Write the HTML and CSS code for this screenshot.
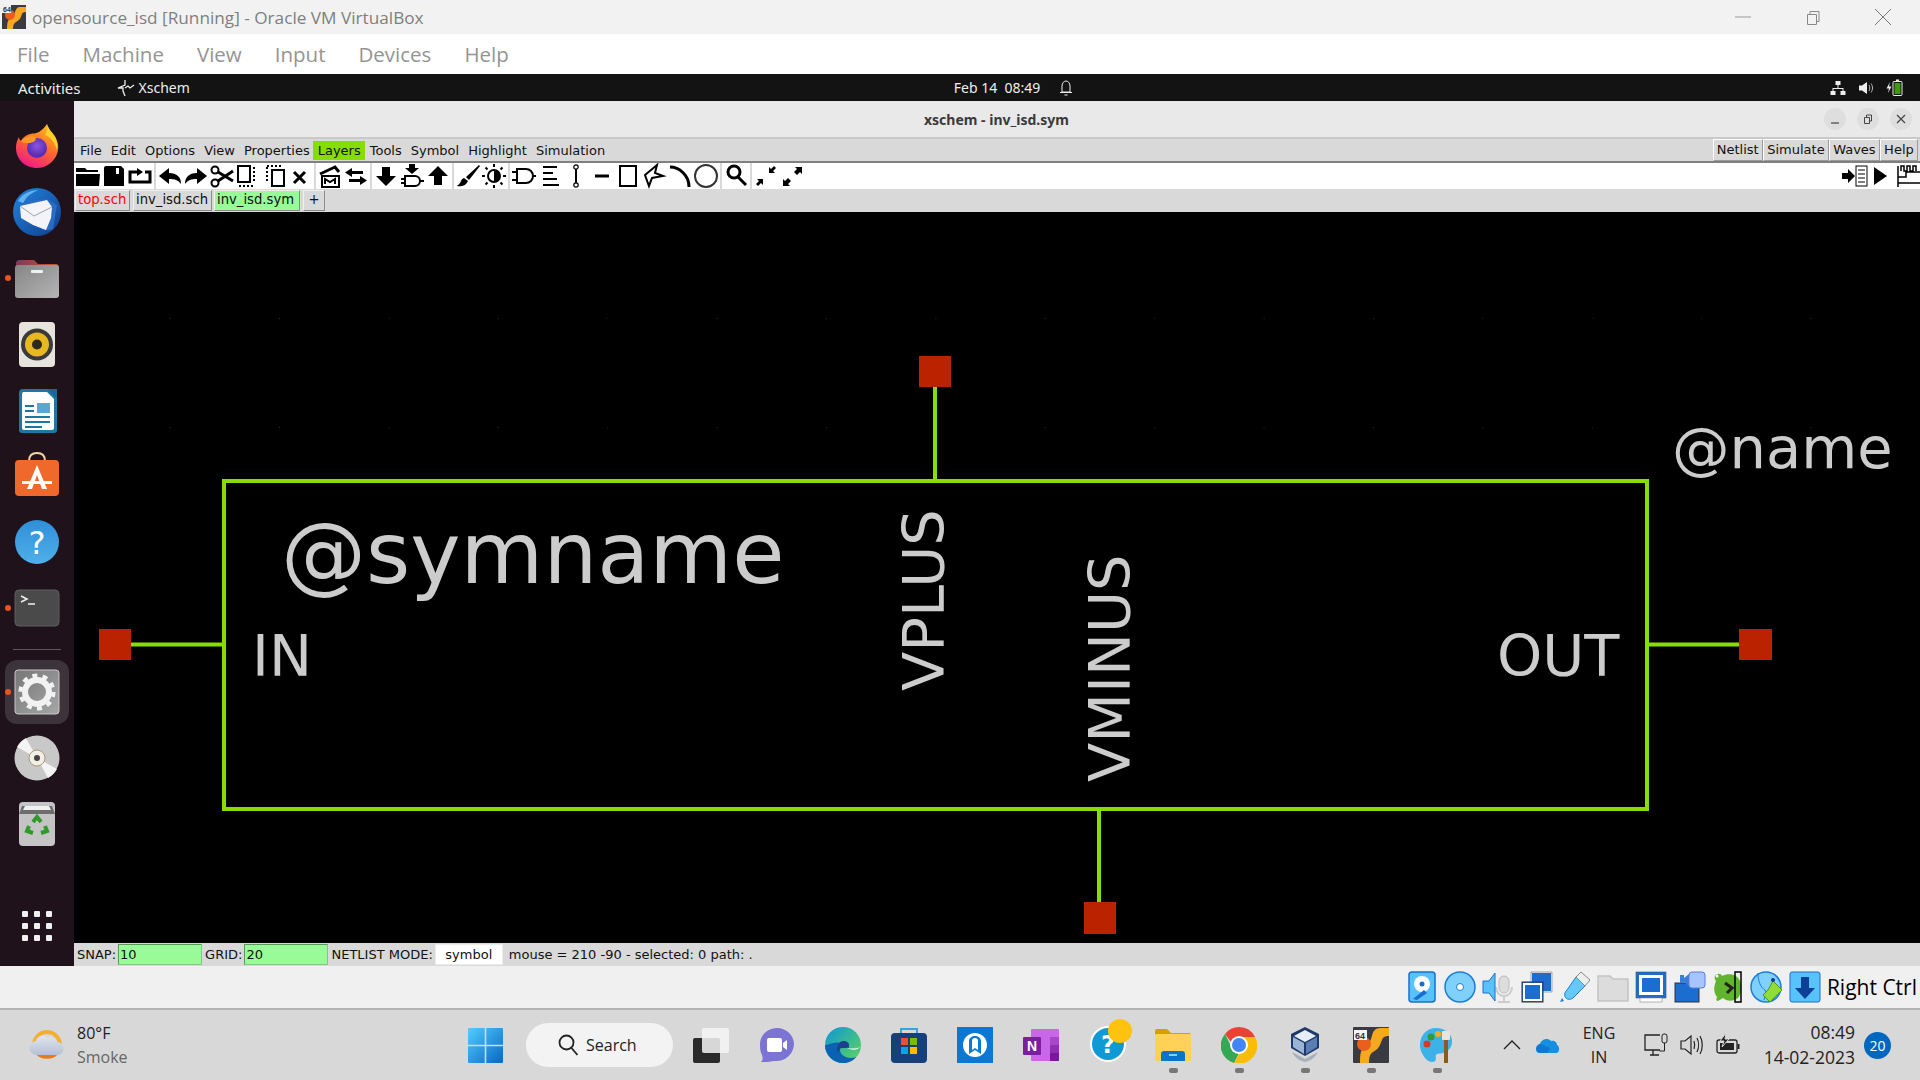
FILE: index.html
```html
<!DOCTYPE html>
<html lang="en">
<head>
<meta charset="UTF-8">
<title>opensource_isd [Running] - Oracle VM VirtualBox</title>
<link rel="stylesheet" href="styles.css">
</head>
<body>

<!-- VirtualBox host window -->
<div class="vm-title">
    <svg class="vm-logo" width="24" height="24" viewBox="0 0 24 24">
        <rect width="24" height="24" fill="#3a3a42"/>
        <path d="M24 2h-6c-3 0-4 2-5 5-1 4-2 6-5 7-2 1-3 3-3 10h6c0-4 1-6 3-7 4-2 5-5 6-8 0-1 1-2 4-2z" fill="#f6a821"/>
        <circle cx="8" cy="10" r="5" fill="#e8601c"/>
        <rect x="0" y="0" width="9" height="8" fill="#eee"/>
        <text x="1" y="7" class="vm-logo-text">64</text>
    </svg>
    <span class="vm-title-text">opensource_isd [Running] - Oracle VM VirtualBox</span>
    <div class="win-controls">
        <svg width="16" height="16" viewBox="0 0 16 16"><path d="M0 8h16" stroke="#999" fill="none"/></svg>
        <svg width="16" height="16" viewBox="0 0 16 16"><path d="M2.500 5.500h9v10h-9zM5 5.500v-3h9v10h-2.500" stroke="#888" fill="none"/></svg>
        <svg width="16" height="16" viewBox="0 0 16 16"><path d="M0 0l16 16M16 0L0 16" stroke="#777" fill="none"/></svg>
    </div>
</div>
<div class="vm-menu">
    <span>File</span><span>Machine</span><span>View</span><span>Input</span><span>Devices</span><span>Help</span>
</div>

<!-- guest desktop -->
<div class="gnome-bar">
    <span class="activities">Activities</span>
    <span class="app-name">
        <svg width="20" height="18" viewBox="0 0 20 18"><path d="M9 1v5l-7 3h5v3l2 5M9 9l3-2 2 2 4-3" stroke="#eee" stroke-width="1.300" fill="none"/></svg>
        Xschem
    </span>
    <span class="clock">Feb 14&nbsp; 08:49</span>
    <svg class="bell" width="14" height="16" viewBox="0 0 14 16"><path d="M3 12V6c0-3 2-5 4-5s4 2 4 5v6zM1 12.500h12M5.500 15h3" stroke="#eee" fill="none"/></svg>
    <div class="gnome-tray">
        <svg width="16" height="16" viewBox="0 0 16 16" fill="#eee"><rect x="5.500" y="1" width="5" height="4"/><rect x="0.500" y="11" width="5" height="4"/><rect x="10.500" y="11" width="5" height="4"/><path d="M7.500 5h1v3h5v3h-1V9h-9v2h-1V8h5z"/></svg>
        <svg width="16" height="16" viewBox="0 0 16 16"><path d="M1 5.500h3L9 2v12L4 10.500H1z" fill="#eee"/><path d="M11 5c1 2 1 4 0 6M13 3.500c2 3 2 6 0 9" stroke="#bbb" fill="none"/></svg>
        <svg width="17" height="18" viewBox="0 0 17 18"><path d="M4 3L0.500 9.500H3L2 14l3.500-6.500H3z" fill="#eee"/><rect x="7" y="2.500" width="9" height="14" rx="1" fill="#111" stroke="#eee"/><rect x="10" y="0.500" width="3" height="2" fill="#eee"/><rect x="8.500" y="4" width="6" height="11" fill="#3f9a0a"/></svg>
    </div>
</div>

<div class="desktop">
    <nav class="dock">
        <div class="dock-item">
            <svg width="48" height="48" viewBox="0 0 48 48">
                <defs>
                    <linearGradient id="ffBody" x1="0.800" y1="0" x2="0.300" y2="1"><stop offset="0" stop-color="#ffc21c"/><stop offset="0.500" stop-color="#ff6a2b"/><stop offset="1" stop-color="#f0178b"/></linearGradient>
                    <radialGradient id="ffCore" cx="0.500" cy="0.400"><stop offset="0" stop-color="#8b55e0"/><stop offset="1" stop-color="#5a2db0"/></radialGradient>
                </defs>
                <path d="M34 2c1 5 4 7 7 11 5 7 5 14 3 19-3 8-11 14-20 14C12 46 3 37 3 26c0-6 2-9 3-11 0 2 1 3 2 4 2-4 5-6 9-7 4-1 5 0 9-2 3-2 6-5 8-8z" fill="url(#ffBody)"/>
                <path d="M34 2c2 6 5 8 8 13 2 4 3 9 2 13-2-7-6-13-12-15 2-3 3-7 2-11z" fill="#ffd42a"/>
                <circle cx="24" cy="26" r="10" fill="url(#ffCore)"/>
                <path d="M8 19c3-3 9-6 13-4 3 1 2 4-1 5l-3 1c-4 0-7 0-9-2z" fill="#ff9a26"/>
            </svg>
        </div>
        <div class="dock-item">
            <svg width="48" height="48" viewBox="0 0 48 48">
                <defs><linearGradient id="tbBlue" x1="0" y1="0" x2="1" y2="1"><stop offset="0" stop-color="#1f86de"/><stop offset="1" stop-color="#123c8c"/></linearGradient></defs>
                <circle cx="24" cy="24" r="24" fill="url(#tbBlue)"/>
                <path d="M8 14l26-3 10 6-4 24c-8 3-12 0-16-3C18 34 12 30 6 26z" fill="#2a6cc4"/>
                <path d="M7 18l27-6 5 7-1 11-5 12-13-5-12-7z" fill="#f4f4f8"/>
                <path d="M7 18l14 10 18-9" stroke="#9aa4b8" fill="none"/>
                <path d="M5 13c4-7 12-11 21-11-6 2-12 6-14 10l-2 3z" fill="#62b4f0"/>
            </svg>
        </div>
        <div class="dock-item running">
            <svg width="48" height="48" viewBox="0 0 48 48">
                <defs>
                    <linearGradient id="fileTab" x1="0" y1="0" x2="1" y2="0"><stop offset="0" stop-color="#7c3a5e"/><stop offset="1" stop-color="#c8582a"/></linearGradient>
                    <linearGradient id="fileBody" x1="0" y1="0" x2="1" y2="1"><stop offset="0" stop-color="#868686"/><stop offset="1" stop-color="#b4b4b4"/></linearGradient>
                </defs>
                <path d="M3 10c0-3 1-4 4-4h14l4 4h17c3 0 4 1 4 4v8H3z" fill="url(#fileTab)"/>
                <rect x="2" y="11" width="44" height="33" rx="3" fill="url(#fileBody)"/>
                <rect x="18" y="16" width="12" height="3" rx="1" fill="#f0f0f0"/>
            </svg>
        </div>
        <div class="dock-item">
            <svg width="48" height="48" viewBox="0 0 48 48">
                <rect x="6" y="2" width="36" height="45" rx="4" fill="#e6e3dc"/>
                <circle cx="24" cy="24.500" r="16" fill="#3a3a3a"/>
                <circle cx="24" cy="24.500" r="12" fill="#e8b820"/>
                <circle cx="24" cy="24.500" r="5" fill="#2e2a20"/>
            </svg>
        </div>
        <div class="dock-item">
            <svg width="48" height="48" viewBox="0 0 48 48">
                <path d="M10 3h26l8 8v33a3 3 0 0 1-3 3H9a3 3 0 0 1-3-3V7a4 4 0 0 1 4-4z" fill="#1d77a5"/>
                <path d="M10 6h24l7 7v29a2 2 0 0 1-2 2H11a2 2 0 0 1-2-2V8z" fill="#fff"/>
                <path d="M34 3l10 10V3z" fill="#186a94"/>
                <rect x="24" y="17" width="13" height="10" fill="#5aa7d4"/>
                <rect x="12" y="19" width="9" height="2" fill="#1d77a5"/>
                <rect x="12" y="24" width="9" height="2" fill="#1d77a5"/>
                <rect x="12" y="30" width="25" height="2" fill="#1d77a5"/>
                <rect x="12" y="35" width="25" height="2" fill="#1d77a5"/>
                <rect x="12" y="40" width="17" height="2" fill="#1d77a5"/>
            </svg>
        </div>
        <div class="dock-item">
            <svg width="48" height="48" viewBox="0 0 48 48">
                <path d="M16 9c0-6 4-8 8-8s8 2 8 8" stroke="#f3d3a8" stroke-width="2" fill="none"/>
                <rect x="2" y="8" width="44" height="36" rx="4" fill="#f0692c"/>
                <path d="M24 13L14 37h5l5-14 5 14h5z" fill="#fff"/>
                <rect x="9" y="29" width="30" height="3" fill="#fff"/>
            </svg>
        </div>
        <div class="dock-item">
            <svg width="48" height="48" viewBox="0 0 48 48">
                <defs><linearGradient id="helpBlue" x1="0" y1="0" x2="0" y2="1"><stop offset="0" stop-color="#2f8ed8"/><stop offset="1" stop-color="#4fb0ea"/></linearGradient></defs>
                <circle cx="24" cy="24" r="22" fill="url(#helpBlue)"/>
                <text x="24" y="36" class="help-mark">?</text>
            </svg>
        </div>
        <div class="dock-item running">
            <svg width="48" height="48" viewBox="0 0 48 48">
                <rect x="2" y="6" width="44" height="36" rx="4" fill="#4a4a4a" stroke="#5e5e5e"/>
                <path d="M8 12l6 3-6 3" stroke="#f0f0f0" stroke-width="1.500" fill="none"/>
                <path d="M15 20h7" stroke="#f0f0f0" stroke-width="1.500"/>
            </svg>
        </div>
        <div class="dock-sep"></div>
        <div class="dock-item running active">
            <svg width="48" height="48" viewBox="0 0 48 48">
                <defs><linearGradient id="setBg" x1="0" y1="0" x2="1" y2="1"><stop offset="0" stop-color="#777"/><stop offset="1" stop-color="#a6a6a6"/></linearGradient></defs>
                <rect x="2" y="2" width="44" height="44" rx="3" fill="url(#setBg)" stroke="#c8c8c8"/>
                <circle cx="24" cy="24" r="12" fill="none" stroke="#f2f2f2" stroke-width="6"/>
                <circle cx="24" cy="24" r="16.500" fill="none" stroke="#f2f2f2" stroke-width="4" stroke-dasharray="5 5.370"/>
            </svg>
        </div>
        <div class="dock-item">
            <svg width="48" height="48" viewBox="0 0 48 48">
                <circle cx="24" cy="24" r="22.500" fill="#c8c8c8"/>
                <path d="M24 24L4 13A22.500 22.500 0 0 1 13 4zM24 24L44 35A22.500 22.500 0 0 1 35 44z" fill="#f4f4f4"/>
                <circle cx="24" cy="24" r="8" fill="#f2efe6" stroke="#a89878"/>
                <circle cx="24" cy="24" r="3" fill="#444"/>
            </svg>
        </div>
        <div class="dock-item">
            <svg width="48" height="48" viewBox="0 0 48 48">
                <rect x="6" y="2" width="36" height="44" rx="4" fill="#c4c4c4"/>
                <path d="M9 6h30l3 8H6z" fill="#6e6e6e"/>
                <path d="M12 6h24l2 4H10z" fill="#f0f0f0"/>
                <g fill="none" stroke="#2f9a2a" stroke-width="4">
                    <path d="M20 22l4-5 4 5"/><path d="M32 26l2 5-6 2"/><path d="M16 26l-2 5 6 2"/>
                </g>
            </svg>
        </div>
        <div class="dock-apps">
            <i></i><i></i><i></i><i></i><i></i><i></i><i></i><i></i><i></i>
        </div>
    </nav>

    <main class="xschem">
        <div class="xs-title">
            <span class="xs-title-text">xschem - inv_isd.sym</span>
            <div class="xs-controls">
                <span><svg width="10" height="10" viewBox="0 0 10 10"><path d="M1 9h8" stroke="#444" stroke-width="1.200"/></svg></span>
                <span><svg width="10" height="10" viewBox="0 0 10 10"><path d="M1.500 3.500h5v6h-5zM3.500 3V1h5v6H7" stroke="#444" fill="none"/></svg></span>
                <span><svg width="10" height="10" viewBox="0 0 10 10"><path d="M1 1l8 8M9 1L1 9" stroke="#444" stroke-width="1.200"/></svg></span>
            </div>
        </div>

        <div class="xs-menu">
            <span>File</span><span>Edit</span><span>Options</span><span>View</span><span>Properties</span>
            <span class="layers">Layers</span>
            <span>Tools</span><span>Symbol</span><span>Highlight</span><span>Simulation</span>
            <div class="xs-menu-right">
                <span>Netlist</span><span>Simulate</span><span>Waves</span><span>Help</span>
            </div>
        </div>

        <div class="toolbar">
            <svg viewBox="0 0 26 26"><path d="M1 9V5h9l2 2h11v2zM1 11h24l-1 12H1z"/></svg>
            <svg viewBox="0 0 26 26"><path d="M5 3h15l3 3v17H3V5a2 2 0 0 1 2-2z"/><rect x="15" y="5" width="3" height="6" fill="#fff"/></svg>
            <svg viewBox="0 0 26 26"><path d="M10 9H3v10h20V9h-5" class="ln3"/><path d="M10 5l6 4-6 4z"/></svg>
            <i class="tb-sep"></i>
            <svg viewBox="0 0 26 26"><path d="M12 5L2 13l10 8v-5c6 0 9 1 12 5 0-7-4-11-12-11z"/></svg>
            <svg viewBox="0 0 26 26"><path d="M14 5l10 8-10 8v-5c-6 0-9 1-12 5 0-7 4-11 12-11z"/></svg>
            <svg viewBox="0 0 26 26"><circle cx="6" cy="7" r="3.500" class="ln2"/><circle cx="6" cy="20" r="3.500" class="ln2"/><path d="M9 9l15 9M9 18L24 8" class="ln3"/></svg>
            <svg viewBox="0 0 26 26"><rect x="3" y="3" width="12" height="16" class="ln2"/><path d="M19 4v16M4 23h16" class="ln3 dots"/></svg>
            <svg viewBox="0 0 26 26"><rect x="11" y="7" width="12" height="16" class="ln2"/><path d="M6 4v16M6 3h16" class="ln3 dots"/></svg>
            <svg viewBox="0 0 26 26"><path d="M7 9l11 11M18 9L7 20" class="ln3"/></svg>
            <i class="tb-sep"></i>
            <svg viewBox="0 0 26 26"><path d="M5 13h17v11H5z" class="ln2"/><path d="M3 11L18 4l4 5" class="ln3"/><path d="M8 21v-5l5 3 5-3v5" class="ln2"/></svg>
            <svg viewBox="0 0 26 26"><path d="M9 5L2 9.500 9 14v-3h11V8H9zM17 13l7 4.500-7 4.500v-3H6v-3h11z"/></svg>
            <i class="tb-sep"></i>
            <svg viewBox="0 0 26 26"><path d="M9 4h8v9h6L13 23 3 13h6z"/></svg>
            <svg viewBox="0 0 26 26"><path d="M10 1h6v4h4l-7 6-7-6h4z"/><path d="M6 13h10a5 5 0 0 1 0 10H6zM2 16h4M2 20h4M21 18h4" class="ln2"/></svg>
            <svg viewBox="0 0 26 26"><path d="M13 3l10 10h-6v9H9v-9H3z"/></svg>
            <i class="tb-sep"></i>
            <svg viewBox="0 0 26 26"><path d="M24 2L11 14l3 3L25 3zM9 15c-3 1-3 4-4 5-1 2-3 2-3 3 3 1 9 0 11-5z"/></svg>
            <svg viewBox="0 0 26 26"><circle cx="13" cy="13" r="6" class="ln2"/><path d="M13 7a6 6 0 0 1 0 12z"/><path d="M13 1v3M13 22v3M1 13h3M22 13h3M4.500 4.500l2 2M19.500 19.500l2 2M21.500 4.500l-2 2M6.500 19.500l-2 2" class="ln2"/></svg>
            <i class="tb-sep"></i>
            <svg viewBox="0 0 26 26"><path d="M6 6h9a7 7 0 0 1 0 14H6zM1 9h5M1 17h5M22 13h3" class="ln2"/></svg>
            <svg viewBox="0 0 26 26"><path d="M6 4h14M6 10h10M6 16h14M6 22h16" class="ln2"/></svg>
            <svg viewBox="0 0 26 26"><path d="M13 6v14" class="ln2"/><circle cx="13" cy="4" r="2.200" class="ln1"/><circle cx="13" cy="22" r="2.200" class="ln1"/></svg>
            <svg viewBox="0 0 26 26"><path d="M6 13h14" class="ln3"/></svg>
            <svg viewBox="0 0 26 26"><rect x="5" y="3" width="16" height="20" class="ln2"/></svg>
            <svg viewBox="0 0 26 26"><path d="M16 2L4 12l4 11 3-8 11-2-8-3z" class="ln2"/></svg>
            <svg viewBox="0 0 26 26"><path d="M3 4c9 0 19 8 19 20" class="ln3"/></svg>
            <svg viewBox="0 0 26 26"><circle cx="13" cy="13" r="11" fill="none" stroke="#333" stroke-width="2"/></svg>
            <i class="tb-sep"></i>
            <svg viewBox="0 0 26 26"><circle cx="11" cy="9" r="6" class="ln3"/><path d="M15 14l8 8" class="ln3"/></svg>
            <i class="tb-sep"></i>
            <svg viewBox="0 0 26 26"><path d="M16 10V4l2 2 3-3 2 2-3 3 2 2zM10 16v6l-2-2-3 3-2-2 3-3-2-2z"/></svg>
            <svg viewBox="0 0 26 26"><path d="M23 4v7l-2-2-3 3-3-3 3-3-2-2zM4 23v-7l2 2 3-3 3 3-3 3 2 2z"/></svg>
            <div class="toolbar-right">
                <svg viewBox="0 0 30 26"><path d="M1 10h6V6l7 7-7 7v-4H1z"/><rect x="15" y="3" width="11" height="20" fill="none" stroke="#000"/><path d="M17 7h7M17 11h7M17 15h7M17 19h7" stroke="#000"/></svg>
                <svg viewBox="0 0 18 26"><path d="M3 4l13 9-13 9z"/></svg>
                <svg viewBox="0 0 24 26"><path d="M2 3v21M2 20h22M2 14h8v-5h14M5 8V3h3v5h3V3h3v5h3V3h3v5" fill="none" stroke="#000" stroke-width="1.500"/></svg>
            </div>
        </div>

        <div class="tabs">
            <span class="tab tab-red">top.sch</span>
            <span class="tab tab-sch">inv_isd.sch</span>
            <span class="tab tab-green">inv_isd.sym</span>
            <span class="tab tab-add">+</span>
        </div>

        <!-- symbol drawing, place on the canvas is the content -->
        <svg class="canvas" viewBox="74 212 1846 731" width="1846" height="731">
            <defs>
                <pattern id="grid" x="279" y="427" width="109.400" height="109" patternUnits="userSpaceOnUse">
                    <rect width="1" height="1" fill="#2c2c2c"/>
                </pattern>
            </defs>
            <rect x="74" y="212" width="1846" height="731" fill="#000"/>
            <rect x="74" y="212" width="1846" height="731" fill="url(#grid)"/>
            <g class="wires">
                <rect x="224" y="481" width="1423" height="328"/>
                <path d="M935 387v94M131 644.500h93M1647 644.500h92M1099 809v93"/>
            </g>
            <g fill="#bb2200">
                <rect x="919" y="356" width="32" height="31"/>
                <rect x="99" y="629" width="32" height="31"/>
                <rect x="1739" y="629" width="33" height="31"/>
                <rect x="1084" y="902" width="32" height="32"/>
            </g>
            <text x="281" y="583" class="sym-big">@symname</text>
            <text x="1672" y="468" class="sym-text">@name</text>
            <text x="252" y="676" class="sym-text">IN</text>
            <text x="1497" y="676" class="sym-text">OUT</text>
            <text transform="translate(943.500 691) rotate(-90)" class="sym-text">VPLUS</text>
            <text transform="translate(1130 782) rotate(-90)" class="sym-text">VMINUS</text>
        </svg>

        <div class="status">
            <span class="st-label">SNAP:</span><span class="st-input">10</span>
            <span class="st-label">GRID:</span><span class="st-input">20</span>
            <span class="st-label">NETLIST MODE:</span><span class="st-mode">symbol</span>
            <span class="st-mouse">mouse = 210 -90 - selected: 0 path: .</span>
        </div>
    </main>
</div>

<!-- VirtualBox status bar -->
<div class="vm-status">
    <svg viewBox="0 0 32 32"><rect x="3" y="1" width="26" height="30" rx="3" fill="#58c3fa" stroke="#1c6dd0" stroke-width="1.500"/><circle cx="16" cy="13" r="8" fill="#fff"/><circle cx="16" cy="13" r="2.500" fill="#1c6dd0"/><path d="M7 28l11-9 3 3-10 7z" fill="#1c6dd0"/></svg>
    <svg viewBox="0 0 32 32"><circle cx="16" cy="16" r="15" fill="#7fd0fb" stroke="#1c7ed8" stroke-width="1.500"/><circle cx="16" cy="16" r="3.500" fill="#fff" stroke="#1c7ed8"/></svg>
    <svg viewBox="0 0 32 32"><rect x="17" y="5" width="10" height="17" rx="5" fill="#ddd" stroke="#bbb"/><path d="M14 16c0 12 16 12 16 0M22 26v4M16 31h12" stroke="#ccc" stroke-width="2" fill="none"/><path d="M1 10h6l6-8v28l-6-8H1z" fill="#58c3fa" stroke="#1c6dd0"/></svg>
    <svg viewBox="0 0 32 32"><rect x="10" y="1" width="21" height="20" fill="#1c6dd0" stroke="#fff" stroke-width="2"/><rect x="10" y="1" width="21" height="20" fill="none" stroke="#555" stroke-width="0.600"/><rect x="1" y="11" width="21" height="20" fill="#1c6dd0" stroke="#333" stroke-width="1"/><rect x="3" y="13" width="17" height="16" fill="none" stroke="#fff" stroke-width="2"/></svg>
    <svg viewBox="0 0 32 32"><path d="M17 6l9 9-11 11c-3 3-6 3-8 1s-2-5 1-8z" fill="#66c8fb" stroke="#1c7ed8"/><path d="M22 1l9 8-5 6-9-9z" fill="#eee" stroke="#888"/><path d="M3 27l-2 4 4-1z" fill="#1c7ed8"/></svg>
    <svg viewBox="0 0 32 32"><path d="M1 5h12l3 3h15v22H1z" fill="#dcdcdc" stroke="#c4c4c4" stroke-width="1.500"/></svg>
    <svg viewBox="0 0 32 32"><rect x="1" y="1" width="30" height="26" fill="#1c6dd0" stroke="#555" stroke-width="0.600"/><rect x="4" y="4" width="24" height="20" fill="#fff"/><rect x="7" y="7" width="18" height="14" fill="#1c6dd0"/><rect x="5" y="27" width="22" height="4" fill="#fff" stroke="#888" stroke-width="0.600"/></svg>
    <svg viewBox="0 0 32 32"><rect x="1" y="12" width="24" height="19" fill="#1c6dd0" stroke="#333"/><path d="M6 4h4v8H6zM10 7l5-4v12l-5-4z" fill="#3a7edc"/><rect x="15" y="1" width="16" height="16" rx="3" fill="#a8c4ff" stroke="#5a7edc"/></svg>
    <svg viewBox="0 0 32 32"><path d="M3 5c2-3 6-3 7 0 6-3 14-2 17 3 3 6 3 14-1 19-5 4-12 3-15 0l-5 3c-2 0-2-2-1-4-4-5-3-11-1-16C3 9 2 7 3 5z" fill="#62b32e"/><circle cx="5" cy="5" r="1.500" fill="#fff"/><path d="M13 12l7 5-5 5" stroke="#222" stroke-width="3" fill="none"/><rect x="23" y="1" width="6" height="30" fill="none" stroke="#000" stroke-width="1.500"/></svg>
    <svg viewBox="0 0 32 32"><circle cx="16" cy="16" r="15" fill="#7fd0fb" stroke="#1c7ed8" stroke-width="1.500"/><path d="M8 2c0 8 2 14 8 18l-2 9" stroke="#1c7ed8" fill="none"/><path d="M23 10l9 9-12 12-7-7 5-5z" fill="#8fdc3a" stroke="#4a9a14"/><circle cx="23" cy="9" r="2" fill="#123c8c"/></svg>
    <svg viewBox="0 0 32 32"><rect x="1" y="1" width="30" height="30" rx="2" fill="#58c3fa" stroke="#1c6dd0"/><path d="M12 6h8v11h6L16 28 6 17h6z" fill="#0c3f96"/></svg>
    <span class="host-key">Right Ctrl</span>
</div>

<!-- Windows taskbar -->
<footer class="taskbar">
    <div class="weather">
        <svg width="36" height="32" viewBox="0 0 36 32">
            <defs><linearGradient id="cloud" x1="0" y1="0" x2="0" y2="1"><stop offset="0" stop-color="#dfe5ee"/><stop offset="1" stop-color="#b4c0d2"/></linearGradient></defs>
            <path d="M5 16a13 13 0 0 1 26 0" fill="none" stroke="#f3b02e" stroke-width="4"/>
            <path d="M7 25a12 8 0 0 0 22 0z" fill="#ea7a12"/>
            <path d="M8 26a7 7 0 0 1-1-14c1-5 8-7 11-3 4-2 9 0 10 4 8 0 9 12 1 13z" fill="url(#cloud)"/>
        </svg>
        <div class="weather-text">
            <span class="temp">80°F</span>
            <span class="cond">Smoke</span>
        </div>
    </div>
    <svg class="win-logo" width="35" height="35" viewBox="0 0 35 35">
        <defs><linearGradient id="winBlue" x1="0" y1="0" x2="1" y2="1"><stop offset="0" stop-color="#52cdfc"/><stop offset="1" stop-color="#0568c8"/></linearGradient></defs>
        <path d="M0 1a1 1 0 0 1 1-1h15.700v16.700H0zM18.300 0H34a1 1 0 0 1 1 1v15.700H18.300zM0 18.300h16.700V35H1a1 1 0 0 1-1-1zM18.300 18.300H35V34a1 1 0 0 1-1 1H18.300z" fill="url(#winBlue)"/>
    </svg>
    <div class="search">
        <svg width="20" height="22" viewBox="0 0 20 22"><circle cx="8.500" cy="8.500" r="7" fill="none" stroke="#222" stroke-width="1.800"/><path d="M13.500 14l6 7" stroke="#222" stroke-width="1.800"/></svg>
        <span>Search</span>
    </div>
    <div class="task-apps">
        <div class="task-item">
            <svg width="38" height="36" viewBox="0 0 38 36"><rect x="1" y="11" width="27" height="25" rx="2" fill="#2a2a2a"/><rect x="10" y="1" width="27" height="25" rx="2" fill="#f6f6f6" opacity="0.850"/></svg>
        </div>
        <div class="task-item">
            <svg width="36" height="36" viewBox="0 0 36 36"><path d="M18 1c10 0 17 8 17 16s-7 17-17 17c-3 0-6 0-9 1H2c2-2 2-4 1-7-2-4-2-7-2-11C1 9 8 1 18 1z" fill="#7b74d4"/><rect x="8" y="11" width="15" height="14" rx="2" fill="#fff"/><path d="M24 16l4-3v10l-4-3z" fill="#fff"/></svg>
        </div>
        <div class="task-item">
            <svg width="38" height="38" viewBox="0 0 38 38">
                <defs><linearGradient id="edgeTop" x1="0" y1="0" x2="1" y2="1"><stop offset="0" stop-color="#0c96d8"/><stop offset="1" stop-color="#5fd85a"/></linearGradient></defs>
                <circle cx="19" cy="19" r="18" fill="url(#edgeTop)"/>
                <path d="M1 19c0 10 8 18 18 18 5 0 10-2 13-6-5 2-14 1-16-6-1-3 0-6 3-8-9-2-15 2-18 2z" fill="#0b62b4"/>
                <path d="M14 27c-2-5 0-11 5-12 4 0 6 2 6 4 0 2-1 3 1 3h-8c-2 0-3 2-4 5z" fill="#1d3f8c"/>
                <path d="M22 21c3 2 10 2 14 0-2 3-9 4-14 0z" fill="#fff"/>
            </svg>
        </div>
        <div class="task-item">
            <svg width="36" height="36" viewBox="0 0 36 36">
                <path d="M10 6V2h16v4" fill="none" stroke="#2ca8e8" stroke-width="2"/>
                <rect y="6" width="36" height="30" rx="4" fill="#16407c"/>
                <rect x="10" y="11" width="7" height="7" fill="#f25022"/><rect x="19" y="11" width="7" height="7" fill="#7fba00"/>
                <rect x="10" y="20" width="7" height="7" fill="#00a4ef"/><rect x="19" y="20" width="7" height="7" fill="#ffb900"/>
            </svg>
        </div>
        <div class="task-item">
            <svg width="36" height="36" viewBox="0 0 36 36">
                <rect width="36" height="36" fill="#0a78d4"/>
                <circle cx="18" cy="18" r="12" fill="#fff"/>
                <path d="M12 27V14c0-3 3-5 6-5s6 2 6 5v13l-6-4z" fill="#0a78d4"/>
                <path d="M15 23V14c0-2 1-3 3-3s3 1 3 3v9l-3-2z" fill="#fff"/>
            </svg>
        </div>
        <div class="task-item">
            <svg width="36" height="34" viewBox="0 0 36 34">
                <rect x="8" y="1" width="28" height="32" rx="1" fill="#c868e8"/>
                <rect x="27" y="9" width="9" height="8" fill="#a848c8"/><rect x="27" y="17" width="9" height="8" fill="#9030b0"/><rect x="27" y="25" width="9" height="8" fill="#7818a0"/>
                <rect y="9" width="18" height="18" rx="1" fill="#7a1fa2"/>
                <text x="9" y="23" class="note-mark">N</text>
            </svg>
        </div>
        <div class="task-item">
            <svg class="help-task" width="44" height="44" viewBox="0 0 44 44">
                <circle cx="20" cy="25" r="17" fill="#0f9ad6" stroke="#fff" stroke-width="2"/>
                <text x="20" y="34" class="task-help-mark">?</text>
                <ellipse cx="32" cy="12" rx="12" ry="12" fill="#ffc20e"/>
            </svg>
        </div>
        <div class="task-item open">
            <svg width="36" height="34" viewBox="0 0 36 34">
                <path d="M0 3a2 2 0 0 1 2-2h10l4 4h18a2 2 0 0 1 2 2v4H0z" fill="#d99e00"/>
                <rect y="6" width="36" height="27" rx="1" fill="#ffd257"/>
                <path d="M6 33v-7a3 3 0 0 1 3-3h18a3 3 0 0 1 3 3v7z" fill="#0a74c8"/>
                <rect x="14" y="26" width="8" height="2" fill="#7ad0f8"/>
            </svg>
        </div>
        <div class="task-item open">
            <svg width="36" height="36" viewBox="0 0 36 36">
                <path d="M18 0a18 18 0 0 1 16 10H18a8 8 0 0 0-8 5L4 7a18 18 0 0 1 14-7z" fill="#ea4335"/>
                <path d="M4 7l7 14a8 8 0 0 0 7 5l-5 10A18 18 0 0 1 4 7z" fill="#34a853"/>
                <path d="M34 10a18 18 0 0 1-21 26l6-10a8 8 0 0 0 6-12l-2-4z" fill="#fbbc05"/>
                <circle cx="18" cy="18" r="9" fill="#fff"/><circle cx="18" cy="18" r="7" fill="#4285f4"/>
            </svg>
        </div>
        <div class="task-item open">
            <svg width="32" height="36" viewBox="0 0 32 36">
                <path d="M16 0l14 7v14l-14 8L2 21V7z" fill="#1f3a68"/>
                <path d="M16 3l11 6-11 6L5 9z" fill="#e8eef6"/>
                <path d="M4 10l11 6v11L4 20z" fill="#9ab4d8"/>
                <path d="M28 10l-11 6v11l11-7z" fill="#5a7eb4"/>
                <path d="M3 25c3 6 8 9 13 10 5-1 10-4 13-10l-13 7z" fill="#a8b0bc"/>
            </svg>
        </div>
        <div class="task-item open">
            <svg width="36" height="36" viewBox="0 0 36 36">
                <rect width="36" height="36" rx="1" fill="#3a3a42"/>
                <path d="M36 1h-8c-6 0-8 3-9 8-2 6-3 9-7 11-4 2-5 6-5 16h9c0-6 1-9 4-11 6-3 7-7 9-12 1-3 3-4 7-4z" fill="#f6a821"/>
                <circle cx="11" cy="17" r="7" fill="#e8601c"/>
                <rect x="1" y="3" width="13" height="10" fill="#f4f4f4"/>
                <text x="2" y="12" class="vm-task-text">64</text>
            </svg>
        </div>
        <div class="task-item open">
            <svg width="34" height="36" viewBox="0 0 34 36">
                <path d="M16 1C7 1 0 8 0 18c0 6 3 10 5 13 3 4 8 5 10 3 2-2 0-4 1-6s4-1 7-2c6-2 9-6 9-12C32 7 25 1 16 1z" fill="#3db2e8"/>
                <circle cx="11" cy="10" r="3.500" fill="#2e9a3a"/><circle cx="18" cy="7" r="3" fill="#f0b020"/><circle cx="7" cy="17" r="3.500" fill="#d83a2a"/>
                <rect x="24" y="12" width="4" height="24" fill="#8a5a20"/>
                <rect x="22" y="4" width="8" height="9" rx="1" fill="#e8e4d8"/>
            </svg>
        </div>
    </div>
    <svg class="chevron" width="18" height="10" viewBox="0 0 18 10"><path d="M1 9l8-8 8 8" fill="none" stroke="#222" stroke-width="1.300"/></svg>
    <svg class="onedrive" width="24" height="15" viewBox="0 0 24 15"><path d="M5 15a5 5 0 0 1-1-9c1-4 7-7 11-3 3-1 6 1 6 4 3 1 3 8-1 8z" fill="#1490df"/><path d="M0 11c0-3 2-5 5-5l9 4-3 5H4a4 4 0 0 1-4-4z" fill="#0f78d4"/></svg>
    <div class="lang"><span>ENG</span><span>IN</span></div>
    <div class="tray">
        <svg width="24" height="24" viewBox="0 0 24 24"><path d="M16 2H1v15h15M6 22h9M9 17v5" fill="none" stroke="#222" stroke-width="1.300"/><rect x="18" y="1" width="5" height="9" rx="2" fill="none" stroke="#222"/><path d="M20.500 10v8h-5" fill="none" stroke="#222"/></svg>
        <svg width="24" height="24" viewBox="0 0 24 24"><path d="M1 8h4l6-5v18l-6-5H1z" fill="none" stroke="#222" stroke-width="1.200"/><path d="M14 8c1 3 1 5 0 8M17 5c2 4 2 10 0 14M20 3c3 5 3 13 0 18" fill="none" stroke="#222" stroke-width="1.200"/></svg>
        <svg width="24" height="24" viewBox="0 0 24 24"><rect x="1" y="7" width="20" height="13" rx="2" fill="none" stroke="#222" stroke-width="1.300"/><rect x="4" y="10" width="14" height="7" fill="#222"/><rect x="21.500" y="11" width="2" height="5" fill="#222"/><path d="M10 0L4 8h4l-2 6 7-8H9z" fill="#222" stroke="#d8d8d8"/></svg>
    </div>
    <div class="datetime"><span>08:49</span><span>14-02-2023</span></div>
    <span class="badge">20</span>
</footer>

</body>
</html>
```

FILE: styles.css
```css
* {
    box-sizing: border-box;
}

html, body {
    margin: 0;
    padding: 0;
}

body {
    width: 1920px;
    height: 1080px;
    overflow: hidden;
    display: flex;
    flex-direction: column;
    font-family: "Open Sans", sans-serif;
    background-color: #f0f0f0;
}

svg {
    display: block;
    flex: none;
}

/* host window */
.vm-title {
    height: 34px;
    background-color: #f2f2f2;
    display: flex;
    align-items: center;
    padding-left: 2px;
}

.vm-logo-text {
    font-family: "Liberation Sans", sans-serif;
    font-size: 7px;
    font-weight: bold;
    fill: #333;
}

.vm-title-text {
    margin-left: 6px;
    font-size: 17.200px;
    color: #7f7f7f;
}

.win-controls {
    margin-left: auto;
    margin-right: 29px;
    display: flex;
    gap: 54px;
}

.vm-menu {
    height: 40px;
    background-color: #fff;
    display: flex;
    align-items: center;
    padding-left: 17px;
    gap: 33px;
    font-size: 20.500px;
    color: #949494;
}

/* guest top bar */
.gnome-bar {
    height: 27px;
    background-color: #131313;
    color: #eee;
    display: flex;
    align-items: center;
    position: relative;
    font-family: "Noto Sans", sans-serif;
    font-size: 14px;
}

.activities {
    margin-left: 18px;
    font-size: 15px;
}

.app-name {
    margin-left: 35px;
    display: flex;
    align-items: center;
    gap: 3px;
}

.clock {
    margin-left: 764px;
}

.bell {
    margin-left: 19px;
}

.gnome-tray {
    margin-left: auto;
    margin-right: 17px;
    display: flex;
    align-items: center;
    gap: 12px;
}

.desktop {
    height: 865px;
    display: flex;
}

/* dock */
.dock {
    width: 74px;
    background-color: #1f121b;
    padding-top: 12px;
    display: flex;
    flex-direction: column;
    align-items: center;
}

.dock-item {
    width: 74px;
    height: 66px;
    display: flex;
    align-items: center;
    justify-content: center;
    position: relative;
}

.dock-item.running::before {
    content: "";
    position: absolute;
    left: 5px;
    top: 30px;
    width: 6px;
    height: 6px;
    border-radius: 50%;
    background-color: #e95420;
}

.dock-item.active::after {
    content: "";
    position: absolute;
    left: 5px;
    top: 1px;
    width: 64px;
    height: 64px;
    border-radius: 12px;
    background-color: #3d333b;
    z-index: 0;
}

.dock-item.active svg,
.dock-item.active::before {
    z-index: 1;
}

.help-mark {
    font-family: "DejaVu Sans", sans-serif;
    font-size: 32px;
    fill: #fff;
    text-anchor: middle;
}

.dock-sep {
    width: 48px;
    height: 1px;
    background-color: #5f555d;
    margin: 8px 0 9px;
}

.dock-apps {
    margin-top: 54px;
    display: grid;
    grid-template-columns: repeat(3, 6px);
    gap: 6px;
}

.dock-apps i {
    width: 6px;
    height: 6px;
    border-radius: 1px;
    background-color: #f0f0f0;
}

/* xschem window */
.xschem {
    width: 1846px;
    display: flex;
    flex-direction: column;
    font-family: "DejaVu Sans", sans-serif;
    font-size: 13px;
    color: #111;
}

.xs-title {
    height: 38px;
    background-color: #e9e9e9;
    border-bottom: 2px solid #c9c9c9;
    display: flex;
    align-items: center;
    position: relative;
}

.xs-title-text {
    margin-left: 850px;
    font-family: "Noto Sans", sans-serif;
    font-size: 14px;
    font-weight: bold;
    color: #3a3a3a;
}

.xs-controls {
    margin-left: auto;
    margin-right: 8px;
    display: flex;
    gap: 11px;
}

.xs-controls span {
    width: 22px;
    height: 22px;
    border-radius: 50%;
    background-color: #dedede;
    display: flex;
    align-items: center;
    justify-content: center;
}

.xs-menu {
    height: 24px;
    background-color: #d9d9d9;
    border-bottom: 2px solid #808080;
    padding-left: 1.500px;
    display: flex;
    align-items: center;
}

.xs-menu span {
    padding: 0 4.500px;
    height: 19px;
    line-height: 19px;
}

.xs-menu .layers {
    margin-left: -1px;
    background-color: #88dd00;
}

.xs-menu-right {
    margin-left: auto;
    padding-right: 2px;
    display: flex;
}

.xs-menu-right span {
    height: 22px;
    line-height: 20px;
    border: 1px solid #fff;
    border-right-color: #9a9a9a;
    border-bottom-color: #9a9a9a;
    padding: 0 3.250px;
}

.toolbar {
    height: 26px;
    background-color: #fff;
    padding-left: 1px;
    display: flex;
    align-items: center;
}

.toolbar svg {
    width: 26px;
    height: 26px;
}

.toolbar .ln1, .toolbar .ln2, .toolbar .ln3 {
    fill: none;
    stroke: #000;
}

.toolbar .ln1 { stroke-width: 1.200; }
.toolbar .ln2 { stroke-width: 2; }
.toolbar .ln3 { stroke-width: 3; }
.toolbar .dots { stroke-dasharray: 2 2; stroke-width: 2; }

.tb-sep {
    width: 2px;
    height: 26px;
    margin: 0 1px;
    background-color: #d9d9d9;
}

.toolbar-right {
    margin-left: auto;
    display: flex;
    align-items: center;
}

.toolbar-right svg:nth-child(1) { width: 30px; }
.toolbar-right svg:nth-child(2) { width: 18px; margin-right: 7px; }
.toolbar-right svg:nth-child(3) { width: 24px; }

.tabs {
    height: 23px;
    background-color: #d9d9d9;
    display: flex;
    align-items: center;
    padding-left: 1px;
    gap: 3px;
    font-size: 13.200px;
}

.tab {
    height: 21px;
    line-height: 18px;
    padding: 0 2px;
    border: 1px solid #efefef;
    border-right-color: #8c8c8c;
    border-bottom-color: #8c8c8c;
    white-space: nowrap;
}

.tab-red {
    width: 55px;
    color: #f00;
}

.tab-sch {
    width: 79px;
}

.tab-green {
    width: 86px;
    margin-left: -1px;
    background-color: #98fb98;
}

.tab-add {
    width: 22px;
    text-align: center;
}

.canvas {
    height: 731px;
}

.wires {
    fill: none;
    stroke: #88dd00;
    stroke-width: 4;
}

.canvas text {
    font-family: "DejaVu Sans", sans-serif;
    fill: #ccc;
}

.sym-text {
    font-size: 57.500px;
}

.sym-big {
    font-size: 85px;
}

.status {
    height: 23px;
    background-color: #d9d9d9;
    display: flex;
    align-items: center;
    padding-left: 3px;
}

.st-input {
    width: 84px;
    height: 21px;
    line-height: 19px;
    margin: 0 3px 0 2px;
    padding-left: 1px;
    background-color: #98fb98;
    border: 1px solid #7ccc7c;
    border-left-color: #5a9a5a;
    border-top-color: #5a9a5a;
}

.st-mode {
    width: 68px;
    height: 21px;
    line-height: 19px;
    margin-left: 2px;
    text-align: center;
    background-color: #fff;
    border: 1px solid #ececec;
}

.st-mouse {
    margin-left: 6px;
}

/* VirtualBox status bar */
.vm-status {
    height: 44px;
    background-color: #f0f0f0;
    border-bottom: 2px solid #b2b2b2;
    display: flex;
    align-items: center;
    justify-content: flex-end;
    gap: 6.300px;
}

.vm-status svg {
    width: 32px;
    height: 32px;
}

.host-key {
    margin-left: 0;
    margin-right: 3px;
    font-size: 21px;
    color: #000;
}

/* Windows taskbar */
.taskbar {
    height: 70px;
    background-color: #d8d8d8;
    display: flex;
    align-items: center;
    color: #222;
}

.weather {
    width: 468px;
    padding-left: 29px;
    display: flex;
    align-items: center;
    gap: 12px;
}

.weather-text {
    display: flex;
    flex-direction: column;
    font-size: 16px;
    line-height: 24px;
}

.cond {
    color: #666;
}

.search {
    width: 147px;
    height: 44px;
    margin-left: 23px;
    border-radius: 22px;
    background-color: #f3f3f3;
    display: flex;
    align-items: center;
    gap: 8px;
    padding-left: 32px;
    font-size: 16px;
}

.task-apps {
    display: flex;
    margin-left: 5px;
}

.task-item {
    width: 66px;
    height: 70px;
    display: flex;
    align-items: center;
    justify-content: center;
    position: relative;
}

.task-item.open::after {
    content: "";
    position: absolute;
    left: 29px;
    top: 58px;
    width: 9px;
    height: 5px;
    border-radius: 2px;
    background-color: #777;
}

.help-task {
    margin-left: 6px;
    margin-top: -8px;
}

.note-mark {
    font-family: "Liberation Sans", sans-serif;
    font-size: 14px;
    font-weight: bold;
    fill: #fff;
    text-anchor: middle;
}

.task-help-mark {
    font-family: "DejaVu Sans", sans-serif;
    font-size: 24px;
    font-weight: bold;
    fill: #fff;
    text-anchor: middle;
}

.vm-task-text {
    font-family: "Liberation Sans", sans-serif;
    font-size: 9px;
    font-weight: bold;
    fill: #333;
}

.chevron {
    margin-left: 33px;
}

.onedrive {
    margin-left: 15px;
}

.lang {
    width: 50px;
    margin-left: 14px;
    display: flex;
    flex-direction: column;
    align-items: center;
    font-size: 16px;
    line-height: 24px;
}

.tray {
    margin-left: 20px;
    display: flex;
    gap: 12px;
}

.datetime {
    width: 100px;
    margin-left: 15px;
    display: flex;
    flex-direction: column;
    align-items: flex-end;
    font-size: 17.500px;
    line-height: 25px;
}

.badge {
    width: 27px;
    height: 27px;
    margin-left: 9px;
    border-radius: 50%;
    background-color: #0067c0;
    color: #fff;
    font-size: 14px;
    line-height: 27px;
    text-align: center;
}
```
